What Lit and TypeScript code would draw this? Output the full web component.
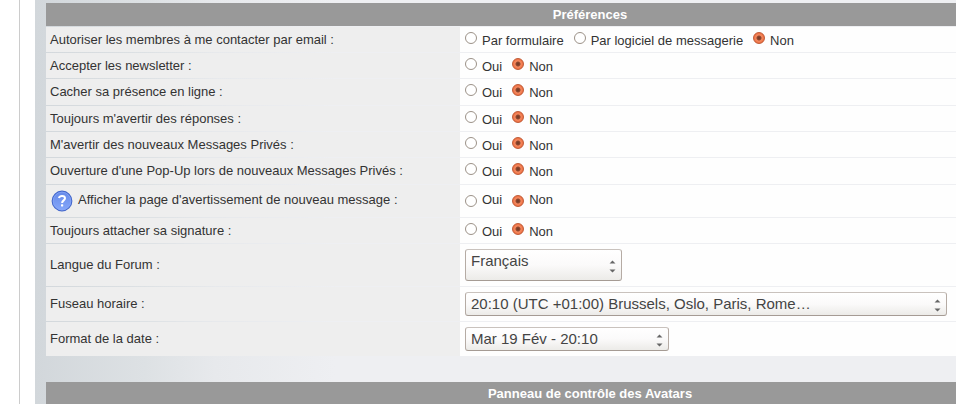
import { LitElement, html, css, nothing } from "lit";
import { customElement, property } from "lit/decorators.js";
import { classMap } from "lit/directives/class-map.js";

interface Preference {
  id: string;
  label: string;
  kind: "radio" | "help" | "select";
  options: string[];
  size?: string;
}

const YES_NO = ["Oui", "Non"];

const PREFERENCES: Preference[] = [
  { id: "contact", label: "Autoriser les membres à me contacter par email :", kind: "radio", options: ["Par formulaire", "Par logiciel de messagerie", "Non"] },
  { id: "newsletter", label: "Accepter les newsletter :", kind: "radio", options: YES_NO },
  { id: "hidden", label: "Cacher sa présence en ligne :", kind: "radio", options: YES_NO },
  { id: "replies", label: "Toujours m'avertir des réponses :", kind: "radio", options: YES_NO },
  { id: "pm", label: "M'avertir des nouveaux Messages Privés :", kind: "radio", options: YES_NO },
  { id: "popup", label: "Ouverture d'une Pop-Up lors de nouveaux Messages Privés :", kind: "radio", options: YES_NO },
  { id: "warning", label: "Afficher la page d'avertissement de nouveau message :", kind: "help", options: YES_NO },
  { id: "signature", label: "Toujours attacher sa signature :", kind: "radio", options: YES_NO },
  { id: "language", label: "Langue du Forum :", kind: "select", options: ["Français"], size: "language" },
  { id: "timezone", label: "Fuseau horaire :", kind: "select", options: ["20:10 (UTC +01:00) Brussels, Oslo, Paris, Rome…"], size: "timezone" },
  { id: "date", label: "Format de la date :", kind: "select", options: ["Mar 19 Fév - 20:10"], size: "date" },
];

@customElement("pref-row")
export class PrefRow extends LitElement {
  @property({ attribute: false }) pref!: Preference;

  static styles = css`
    :host {
      display: grid;
      grid-template-columns: 414px minmax(0, 1fr);
      min-height: 25px;
    }
    .name,
    .value {
      display: flex;
      align-items: center;
      padding: 0 4px;
    }
    .name {
      background: #eeeeee;
    }
    .value {
      background: #fefefe;
      padding: 0 9px 0 5px;
    }
    .help {
      gap: 5px;
      padding-left: 5px;
    }
    .icon {
      width: 22px;
      height: 22px;
      flex: none;
    }
    .help .text {
      margin-bottom: 2px;
    }
    .choices {
      display: flex;
      gap: 10px;
      padding-top: 2px;
    }
    .choice {
      display: flex;
      gap: 5px;
      align-items: flex-start;
    }
    .choice input {
      margin: -1px 0 0;
    }
    .raised {
      padding: 0 0 2px;
    }
    .raised .choice input {
      margin: 3px 0 0;
    }
    input {
      appearance: none;
      box-sizing: border-box;
      flex: none;
      width: 12px;
      height: 12px;
      border: 1px solid #9c9288;
      border-radius: 50%;
      background: #ffffff;
    }
    input:checked {
      border-color: #c05a35;
      background: radial-gradient(circle, #7a3d28 0 1px, #94492f 2px, #f58a60 3px, #ee7043 5px);
    }
    .box {
      display: grid;
      width: 100%;
    }
    .box > * {
      grid-area: 1 / 1;
    }
    .language {
      max-width: 157px;
    }
    .timezone {
      max-width: 482px;
    }
    .date {
      max-width: 204px;
    }
    select {
      appearance: none;
      box-sizing: border-box;
      width: 100%;
      height: 24px;
      margin: 0;
      padding: 0 24px 0 5px;
      border: 1px solid #b5aba4;
      border-top-color: #c9c2bd;
      border-bottom-color: #a59b94;
      border-radius: 3px;
      background: linear-gradient(#ffffff, #fbfafa 50%, #ecebe8);
      color: #444444;
      font: 15px/20px "Liberation Sans", Arial, sans-serif;
    }
    .language select {
      height: 32px;
      padding-bottom: 8px;
    }
    .arrows {
      width: 7px;
      height: 13px;
      justify-self: end;
      align-self: center;
      margin: 3px 6px 0 0;
      pointer-events: none;
    }
  `;

  private helpIcon() {
    return html`<svg class="icon" viewBox="0 0 22 22" role="img" aria-label="Aide">
      <defs>
        <linearGradient id="ball" x1="0" y1="0" x2="0" y2="1">
          <stop offset="0" stop-color="#6488e8" />
          <stop offset="1" stop-color="#86a8fa" />
        </linearGradient>
      </defs>
      <circle cx="11" cy="11" r="9.8" fill="url(#ball)" stroke="#4468cc" stroke-width="1.2" />
      <circle cx="11" cy="11" r="8.8" fill="none" stroke="#86a6f6" stroke-width="0.8" />
      <path d="M7.9 8C8.4 6.5 9.6 5.9 11 5.9c1.8 0 3 .9 3 2.4 0 2-2.9 2.2-2.9 4.6" fill="none" stroke="#ffffff" stroke-width="2" />
      <rect x="10" y="14.3" width="2.2" height="2.2" rx="0.4" fill="#ffffff" />
    </svg>`;
  }

  private choices() {
    const { id, options, kind } = this.pref;
    return html`<div
      class=${classMap({ choices: true, raised: kind === "help" })}
      role="radiogroup"
      aria-labelledby="name"
    >
      ${options.map(
        (option, i) => html`<label class="choice">
          <input type="radio" name=${id} value=${option} ?checked=${i === options.length - 1} />
          <span>${option}</span>
        </label>`
      )}
    </div>`;
  }

  private menu() {
    const { options, size } = this.pref;
    return html`<div class="box ${size}">
      <select id="field">
        ${options.map((option) => html`<option>${option}</option>`)}
      </select>
      <svg class="arrows" viewBox="0 0 7 13" aria-hidden="true">
        <path d="M0.5 3.5L3.5 0.5L6.5 3.5ZM0.5 9.5L3.5 12.5L6.5 9.5Z" fill="#666666" />
      </svg>
    </div>`;
  }

  render() {
    const { kind, label } = this.pref;
    return html`
      <div class=${classMap({ name: true, help: kind === "help" })}>
        ${kind === "help" ? this.helpIcon() : nothing}
        ${kind === "select"
          ? html`<label class="text" for="field">${label}</label>`
          : html`<span class="text" id="name">${label}</span>`}
      </div>
      <div class="value">${kind === "select" ? this.menu() : this.choices()}</div>
    `;
  }
}

@customElement("app-root")
export class AppRoot extends LitElement {
  static styles = css`
    :host {
      display: flex;
      min-height: 100vh;
      overflow: hidden;
      background: #ffffff;
      color: #333333;
      font: 13px/16px "Liberation Sans", Arial, sans-serif;
    }
    .margin {
      flex: none;
      width: 19px;
      border-right: 1px solid #cccccc;
      margin-right: 15px;
    }
    .page {
      flex: 1;
      min-width: 0;
      padding: 3px 0 0 11px;
      background: linear-gradient(90deg, #d2d7db, #dde1e4 110px, #e7e9ec 180px, #eeeff2 300px);
    }
    .heading {
      box-sizing: border-box;
      margin: 0;
      height: 23px;
      padding: 4px 0 0 178px;
      background: #999999;
      color: #ffffff;
      font-size: 13px;
      line-height: 16px;
      text-align: center;
    }
    .rows {
      display: flex;
      flex-direction: column;
      gap: 1px;
      padding: 1px 0 26px;
    }
    .radio:nth-child(3n) {
      min-height: 26px;
    }
    .help {
      min-height: 32px;
    }
    .select {
      min-height: 34px;
    }
    .language {
      min-height: 42px;
    }
  `;

  render() {
    return html`
      <div class="margin"></div>
      <main class="page">
        <h2 class="heading">Préférences</h2>
        <div class="rows">
          ${PREFERENCES.map(
            (pref) => html`<pref-row class="${pref.kind} ${pref.size ?? ""}" .pref=${pref}></pref-row>`
          )}
        </div>
        <h2 class="heading">Panneau de contrôle des Avatars</h2>
      </main>
    `;
  }
}
